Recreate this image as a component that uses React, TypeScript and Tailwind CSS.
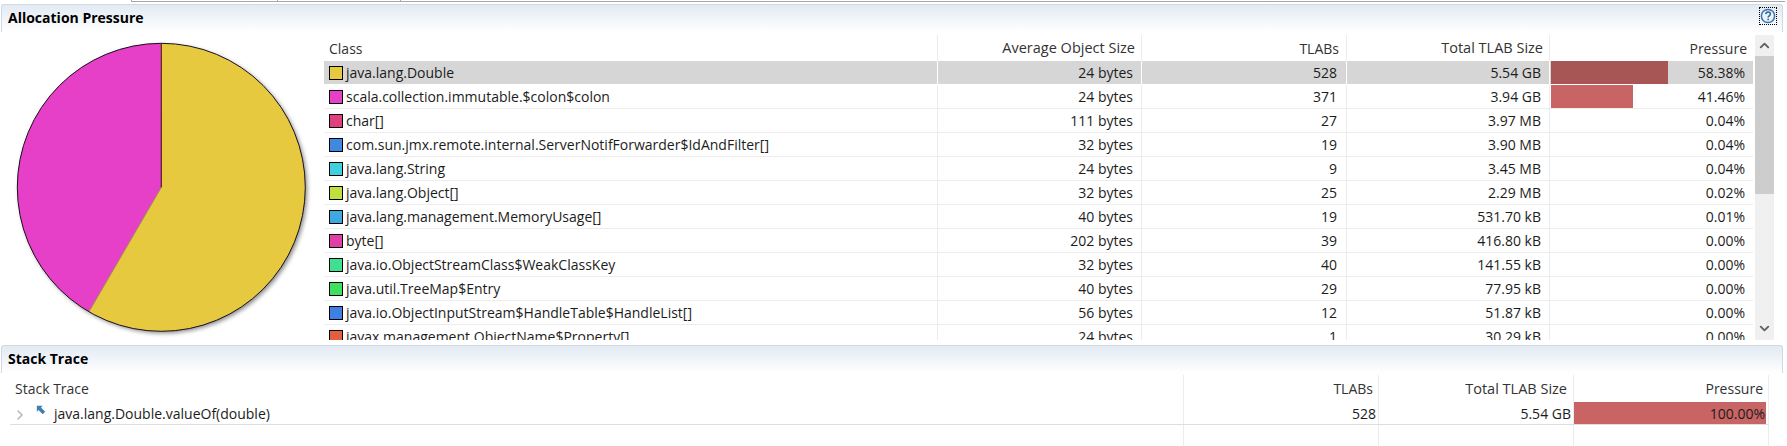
import { ChevronUp, ChevronDown, ChevronRight } from 'lucide-react';

interface ClassRow {
  name: string;
  color: string;
  avg: string;
  tlabs: string;
  size: string;
  pressure: string;
  bar?: string;
}

const rows: ClassRow[] = [
  { name: 'java.lang.Double', color: 'bg-[#e6c93e]', avg: '24 bytes', tlabs: '528', size: '5.54 GB', pressure: '58.38%', bar: 'w-[117px] bg-[#a85555]' },
  { name: 'scala.collection.immutable.$colon$colon', color: 'bg-[#e63fc8]', avg: '24 bytes', tlabs: '371', size: '3.94 GB', pressure: '41.46%', bar: 'w-[82px] bg-[#c86464]' },
  { name: 'char[]', color: 'bg-[#e0407f]', avg: '111 bytes', tlabs: '27', size: '3.97 MB', pressure: '0.04%' },
  { name: 'com.sun.jmx.remote.internal.ServerNotifForwarder$IdAndFilter[]', color: 'bg-[#4088e0]', avg: '32 bytes', tlabs: '19', size: '3.90 MB', pressure: '0.04%' },
  { name: 'java.lang.String', color: 'bg-[#3fd0e0]', avg: '24 bytes', tlabs: '9', size: '3.45 MB', pressure: '0.04%' },
  { name: 'java.lang.Object[]', color: 'bg-[#c0e03f]', avg: '32 bytes', tlabs: '25', size: '2.29 MB', pressure: '0.02%' },
  { name: 'java.lang.management.MemoryUsage[]', color: 'bg-[#3fa8e0]', avg: '40 bytes', tlabs: '19', size: '531.70 kB', pressure: '0.01%' },
  { name: 'byte[]', color: 'bg-[#e03fa8]', avg: '202 bytes', tlabs: '39', size: '416.80 kB', pressure: '0.00%' },
  { name: 'java.io.ObjectStreamClass$WeakClassKey', color: 'bg-[#3fe090]', avg: '32 bytes', tlabs: '40', size: '141.55 kB', pressure: '0.00%' },
  { name: 'java.util.TreeMap$Entry', color: 'bg-[#3fe060]', avg: '40 bytes', tlabs: '29', size: '77.95 kB', pressure: '0.00%' },
  { name: 'java.io.ObjectInputStream$HandleTable$HandleList[]', color: 'bg-[#4080e0]', avg: '56 bytes', tlabs: '12', size: '51.87 kB', pressure: '0.00%' },
  { name: 'javax.management.ObjectName$Property[]', color: 'bg-[#e06040]', avg: '24 bytes', tlabs: '1', size: '30.29 kB', pressure: '0.00%' },
];

function SectionHeader({ title, help }: { title: string; help?: boolean }) {
  return (
    <div className="h-[28px] shrink-0 flex items-start justify-between pl-[6px] pr-[5px] pt-[2px] rounded-t-[3px] border-t border-l border-r border-[#cfdae3] bg-gradient-to-b from-[#e2eaf3] to-white">
      <span className="text-[14px] font-bold text-black leading-[22px]">{title}</span>
      {help && (
        <span className="w-[18px] h-[18px] flex items-center justify-center border border-dotted border-black">
          <svg width="16" height="16" viewBox="0 0 15 15">
            <circle cx="7.5" cy="7.5" r="6.2" fill="#eaf2fa" stroke="#3f74a8" strokeWidth="1.4" />
            <path d="M5.4 5.8c.2-1.3 1.1-2 2.2-2s2.1.8 2.1 1.9c0 1.6-2.1 1.6-2.1 3.2" fill="none" stroke="#2f6498" strokeWidth="1.4" />
            <rect x="6.9" y="10" width="1.5" height="1.5" fill="#2f6498" />
          </svg>
        </span>
      )}
    </div>
  );
}

function PieChart() {
  return (
    <svg width="323" height="308" viewBox="0 0 323 308" className="shrink-0">
      <defs>
        <filter id="pie-shadow" x="-10%" y="-10%" width="120%" height="120%">
          <feGaussianBlur stdDeviation="2" />
        </filter>
      </defs>
      <circle cx="162.3" cy="157.3" r="144" fill="#8a8a8a" filter="url(#pie-shadow)" />
      <circle cx="160.3" cy="155.3" r="144" fill="#e6c93e" />
      <path d="M160.3 155.3 L87.9 279.8 A144 144 0 0 1 159.8 11.3 Z" fill="#e63fc8" />
      <path d="M160.3 155.3 L87.9 279.8" stroke="#a08a5a" strokeWidth="1" fill="none" />
      <path d="M160.3 155.3 L160.3 11.3" stroke="#5a1a2a" strokeWidth="1.2" fill="none" />
      <circle cx="160.3" cy="155.3" r="144" fill="none" stroke="#1a1020" strokeWidth="1" />
    </svg>
  );
}

function Scrollbar() {
  return (
    <div className="w-[19px] ml-[2px] mt-[3px] shrink-0 flex flex-col items-center bg-[#f0f0f0]">
      <div className="h-[21px] shrink-0 flex items-center justify-center">
        <ChevronUp size={15} strokeWidth={3} className="text-[#606060]" />
      </div>
      <div className="w-full h-[138px] shrink-0 bg-[#cdcdcd]" />
      <div className="flex-1" />
      <div className="h-[24px] shrink-0 flex items-center justify-center">
        <ChevronDown size={15} strokeWidth={3} className="text-[#606060]" />
      </div>
    </div>
  );
}

export default function App() {
  return (
    <div className="w-[1787px] h-[446px] overflow-hidden bg-white text-[14px] text-[#1c1c1c] font-['Open_Sans',sans-serif] flex flex-col">
      {/* Tab strip remnant */}
      <div className="h-[4px] shrink-0 pl-[131px] pr-[2px]">
        <div className="h-[2px] flex border-b border-l border-[#a8a8a8]">
          <div className="w-[146px] border-r border-[#a8a8a8]" />
          <div className="w-[123px] border-r border-[#a8a8a8]" />
        </div>
      </div>

      {/* Allocation Pressure */}
      <div className="h-[336px] shrink-0 flex flex-col pl-[1px] pr-[4px]">
        <SectionHeader title="Allocation Pressure" help />
        <div className="flex flex-1 min-h-0 overflow-hidden mr-[9px]">
          <PieChart />
          <div className="flex-1 min-w-0 flex flex-col pt-[3px]">
            <div className="h-[26px] shrink-0 grid grid-cols-[614px_204px_205px_203px_203px] items-center text-[#333]">
              <div className="h-full flex items-center pl-[5px] border-r border-[#ececec]">Class</div>
              <div className="h-full flex items-center justify-end pr-[6px] border-r border-[#ececec] text-[14.5px]">Average Object Size</div>
              <div className="h-full flex items-center justify-end pr-[7px] border-r border-[#ececec]">TLABs</div>
              <div className="h-full flex items-center justify-end pr-[6px] border-r border-[#ececec] text-[14.5px]">Total TLAB Size</div>
              <div className="h-full flex items-center justify-end pr-[6px]">Pressure</div>
            </div>
            {rows.map((row, i) => (
              <div
                key={row.name}
                className={`h-[24px] shrink-0 grid grid-cols-[614px_204px_205px_203px_203px] border-b ${i === 0 ? 'bg-[#d6d6d6] border-white' : 'border-[#ececec]'}`}
              >
                <div className={`flex items-center pl-[5px] gap-[3px] border-r ${i === 0 ? 'border-white' : 'border-[#ececec]'}`}>
                  <span className={`w-[14px] h-[14px] border border-black ${row.color}`} />
                  <span className="whitespace-nowrap">{row.name}</span>
                </div>
                <div className={`flex items-center justify-end pr-[8px] border-r ${i === 0 ? 'border-white' : 'border-[#ececec]'}`}>{row.avg}</div>
                <div className={`flex items-center justify-end pr-[9px] border-r ${i === 0 ? 'border-white' : 'border-[#ececec]'}`}>{row.tlabs}</div>
                <div className={`flex items-center justify-end pr-[8px] border-r ${i === 0 ? 'border-white' : 'border-[#ececec]'}`}>{row.size}</div>
                <div className="relative flex items-center justify-end pr-[8px]">
                  {row.bar && <div className={`absolute left-[1px] top-0 bottom-0 ${row.bar}`} />}
                  <span className="relative">{row.pressure}</span>
                </div>
              </div>
            ))}
          </div>
          <Scrollbar />
        </div>
      </div>

      {/* Stack Trace */}
      <div className="flex-1 min-h-0 flex flex-col mt-[5px] pl-[1px] pr-[4px]">
        <SectionHeader title="Stack Trace" />
        <div className="flex-1 min-h-0 flex flex-col ml-[9px] mr-[14px] pt-[2px]">
          <div className="h-[27px] shrink-0 grid grid-cols-[1174px_195px_195px_195px] items-center text-[#333]">
            <div className="h-full flex items-center pl-[5px] border-r border-[#ececec]">Stack Trace</div>
            <div className="h-full flex items-center justify-end pr-[5px] border-r border-[#ececec]">TLABs</div>
            <div className="h-full flex items-center justify-end pr-[6px] border-r border-[#ececec] text-[14.5px]">Total TLAB Size</div>
            <div className="h-full flex items-center justify-end pr-[5px] border-r border-[#ececec]">Pressure</div>
          </div>
          <div className="h-[23px] shrink-0 grid grid-cols-[1174px_195px_195px_195px] border-b border-[#dedede]">
            <div className="flex items-center pl-[2px] border-r border-[#ececec]">
              <ChevronRight size={16} strokeWidth={2} className="text-[#b0b0b0] mr-[8px] mt-[3px]" />
              <svg width="10" height="10" viewBox="0 0 12 12" className="mr-[8px] -mt-[6px]">
                <path d="M1 1h7L6 3l5 5-3 3-5-5-2 2Z" fill="#3f7fb0" />
              </svg>
              <span>java.lang.Double.valueOf(double)</span>
            </div>
            <div className="flex items-center justify-end pr-[2px] border-r border-[#ececec]">528</div>
            <div className="flex items-center justify-end pr-[2px] border-r border-[#ececec]">5.54 GB</div>
            <div className="flex border-r border-[#ececec]">
              <div className="w-[192px] flex items-center justify-end pr-[1px] bg-[#c86464]">100.00%</div>
            </div>
          </div>
          <div className="flex-1 grid grid-cols-[1174px_195px_195px_195px]">
            <div className="border-r border-[#ececec]" />
            <div className="border-r border-[#ececec]" />
            <div className="border-r border-[#ececec]" />
            <div className="border-r border-[#ececec]" />
          </div>
        </div>
      </div>
    </div>
  );
}
